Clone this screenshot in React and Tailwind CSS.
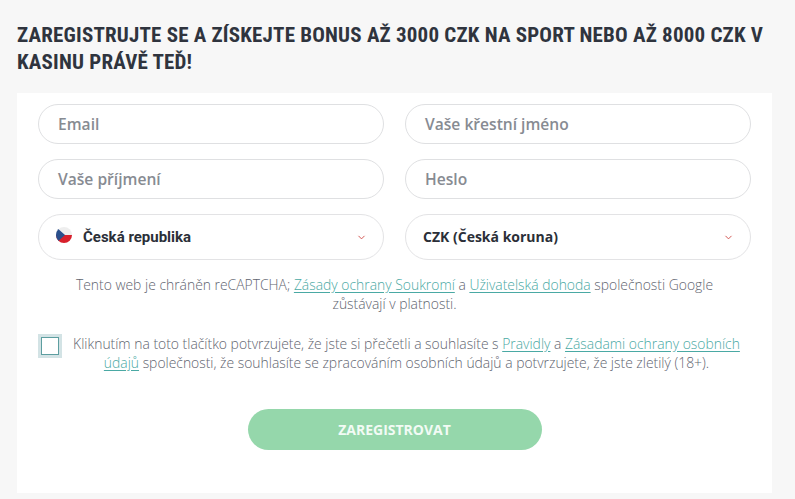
import { ChevronDown } from 'lucide-react'

const openSans = "font-['Open_Sans',sans-serif]"

function Field({ label }) {
  return (
    <div className={`h-10 rounded-full border border-[#dfe0e2] bg-white pl-[19px] pt-px flex items-center text-[15.6px] font-semibold text-[#878b92] ${openSans}`}>
      {label}
    </div>
  )
}

function CzechFlag() {
  return (
    <svg width="16" height="16" viewBox="0 0 16 16" className="mb-[5px] shrink-0">
      <defs>
        <clipPath id="flag-circle">
          <circle cx="8" cy="8" r="8" />
        </clipPath>
      </defs>
      <g clipPath="url(#flag-circle)">
        <rect width="16" height="8" fill="#eeeeee" />
        <rect y="8" width="16" height="8" fill="#d8202c" />
        <path d="M0 0 L9 8 L0 16 Z" fill="#2a4f8c" />
      </g>
    </svg>
  )
}

function Select({ children, pad }) {
  return (
    <div className={`h-[46px] rounded-full border border-[#e3e3e5] bg-white flex items-center justify-between pr-4 ${pad}`}>
      {children}
      <ChevronDown size={11} strokeWidth={2} className="text-[#cf4a46]" />
    </div>
  )
}

function TextLink({ children }) {
  return <a className="text-[#4aa9a4] underline underline-offset-2">{children}</a>
}

export default function App() {
  return (
    <div className="h-[499px] w-[795px] overflow-hidden bg-[#f7f7f7] pl-[17px] pt-[22px]">
      <h1 className="w-[760px] font-['Roboto',sans-serif] text-[21px] leading-[27px] font-bold text-[#2f343e] uppercase [font-stretch:condensed] tracking-[0.2px]">
        Zaregistrujte se a získejte bonus až 3000 CZK na sport nebo až 8000 CZK v kasinu právě teď!
      </h1>
      <div className="mt-[17px] h-[400px] w-[755px] bg-white px-[21px] pt-[11px]">
        <div className="grid grid-cols-2 gap-x-[21px] gap-y-[15px]">
          <Field label="Email" />
          <Field label="Vaše křestní jméno" />
          <Field label="Vaše příjmení" />
          <Field label="Heslo" />
          <Select pad="pl-[17px]">
            <div className="flex items-center gap-[11px]">
              <CzechFlag />
              <span className="font-['Roboto',sans-serif] text-[15px] font-bold text-[#2b2f38]">Česká republika</span>
            </div>
          </Select>
          <Select pad="pl-[17px]">
            <span className={`text-sm font-bold text-[#2b2f38] ${openSans}`}>CZK (Česká koruna)</span>
          </Select>
        </div>
        <p className={`mx-auto mt-[15px] w-[660px] text-center text-[13.9px] leading-[19px] font-light text-[#5f6570] ${openSans}`}>
          Tento web je chráněn reCAPTCHA; <TextLink>Zásady ochrany Soukromí</TextLink> a <TextLink>Uživatelská dohoda</TextLink> společnosti Google zůstávají v platnosti.
        </p>
        <div className="mt-[21px] flex items-start">
          <div className="flex size-6 shrink-0 items-center justify-center bg-[#d3e3e5]">
            <div className="size-[18px] border border-[#5d9ea0] bg-white" />
          </div>
          <p className={`flex-1 text-center text-[13.9px] leading-[19px] font-light text-[#5f6570] ${openSans}`}>
            Kliknutím na toto tlačítko potvrzujete, že jste si přečetli a souhlasíte s <TextLink>Pravidly</TextLink> a <TextLink>Zásadami ochrany osobních údajů</TextLink> společnosti, že souhlasíte se zpracováním osobních údajů a potvrzujete, že jste zletilý (18+).
          </p>
        </div>
        <button className={`mx-auto mt-[37px] flex h-[41px] w-[294px] items-center justify-center rounded-full bg-[#95d7ab] text-sm font-bold text-[#f2fbf5] uppercase ${openSans}`}>
          Zaregistrovat
        </button>
      </div>
    </div>
  )
}
